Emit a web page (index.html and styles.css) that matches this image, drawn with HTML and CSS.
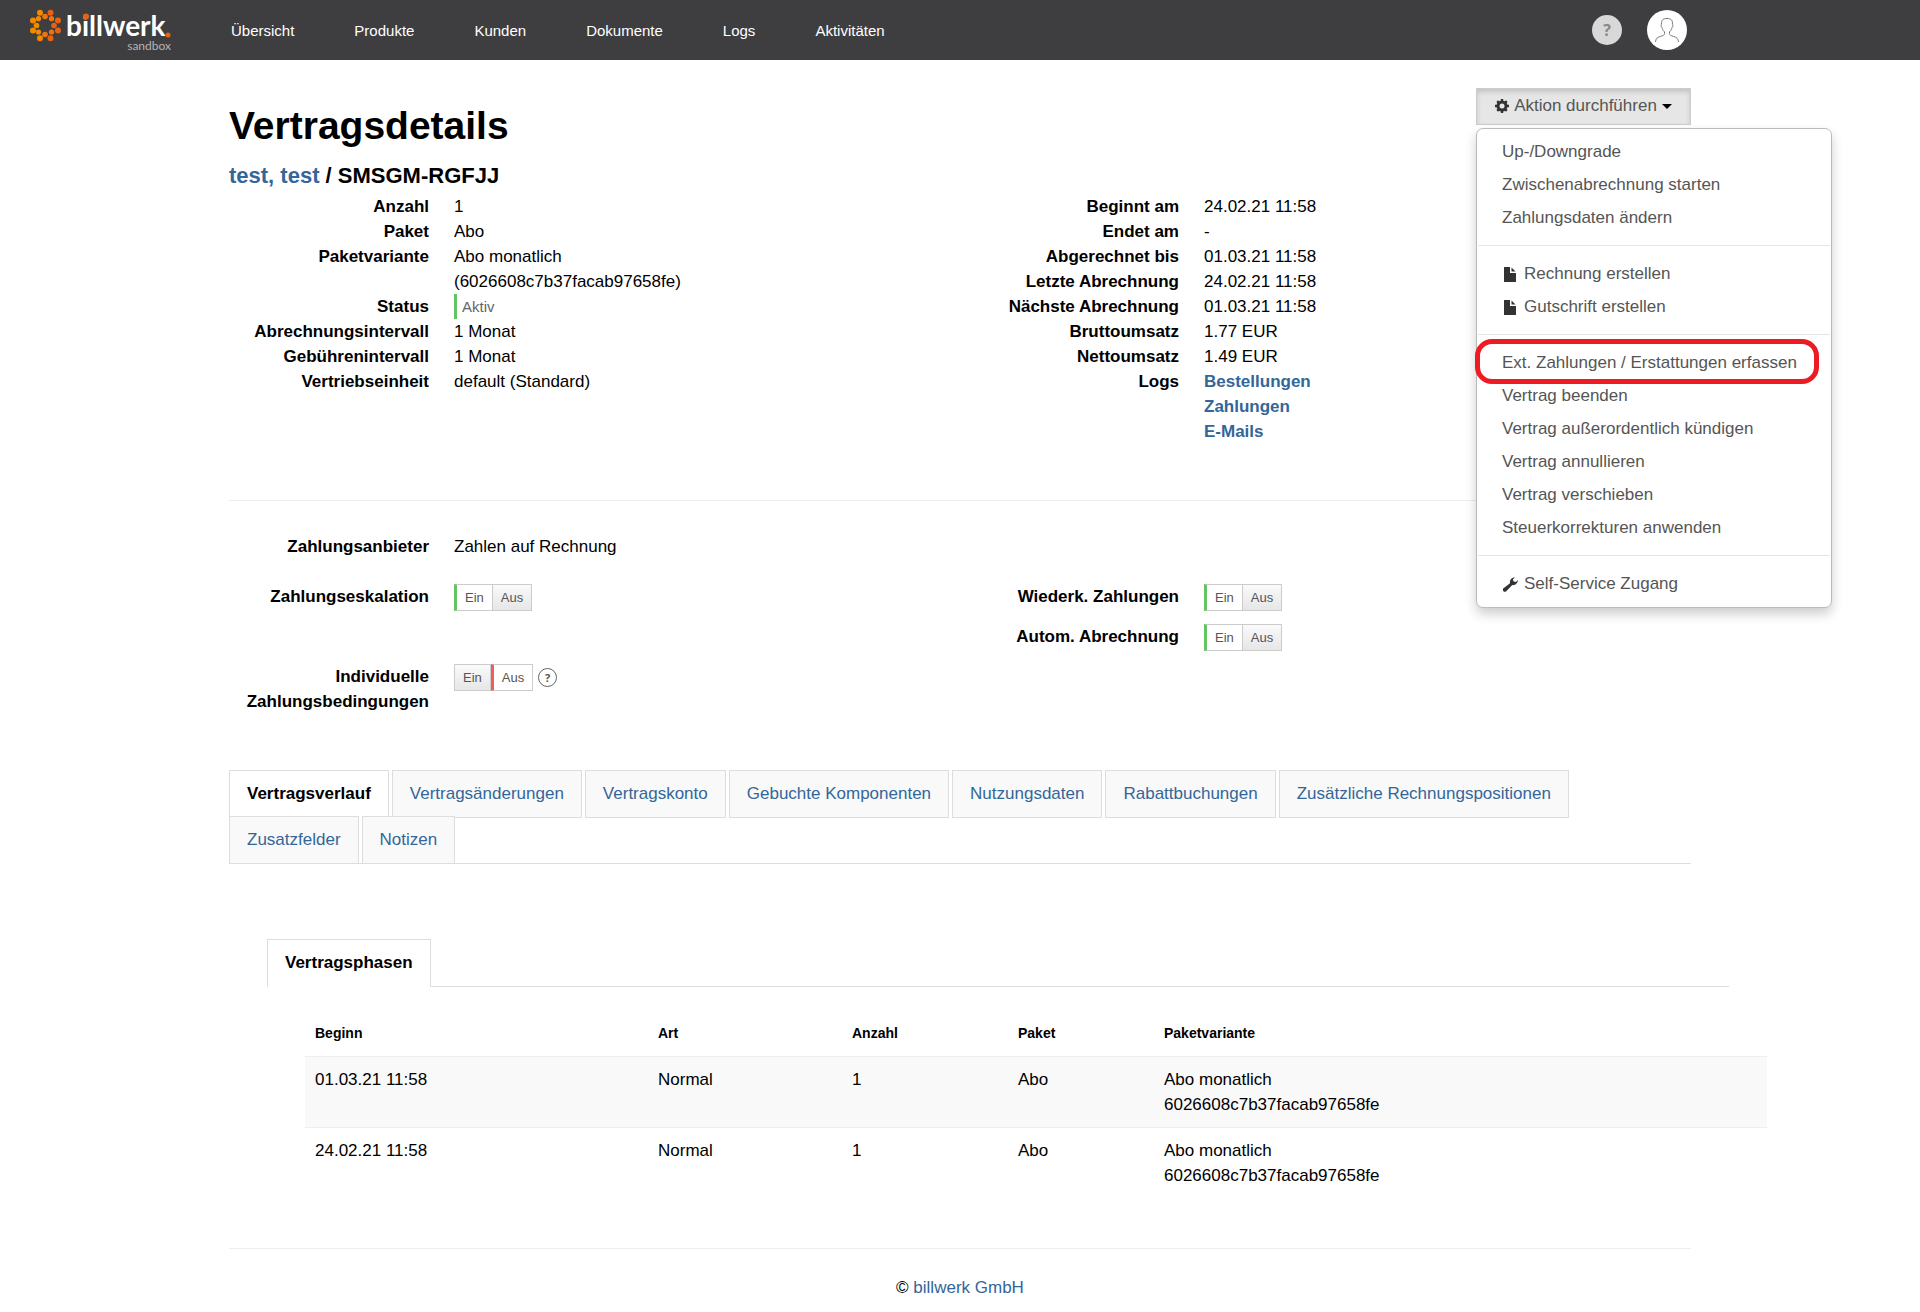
FILE: index.html
```html
<!DOCTYPE html>
<html lang="de">
<head>
<meta charset="utf-8">
<meta name="viewport" content="width=device-width, initial-scale=1">
<title>Vertragsdetails</title>
<link rel="stylesheet" href="styles.css">
</head>
<body>
<header class="topbar">
  <a class="logo" href="#" aria-label="billwerk sandbox">
    <svg width="160" height="60" viewBox="0 0 160 60">
      <g fill="#f28a00">
        <circle cx="9" cy="20.500" r="3"/><circle cx="9" cy="30.500" r="3"/>
        <circle cx="12.500" cy="25.500" r="2.800"/><circle cx="14.500" cy="18.700" r="2.600"/><circle cx="14.500" cy="32" r="2.600"/>
        <circle cx="16" cy="12.800" r="3"/><circle cx="16" cy="38.200" r="3"/>
      </g>
      <g fill="#ee7410">
        <circle cx="21" cy="16.500" r="2.800"/><circle cx="21" cy="34.500" r="2.800"/>
        <circle cx="27.500" cy="18.700" r="2.600"/><circle cx="27.500" cy="32" r="2.600"/>
      </g>
      <g fill="#e96212">
        <circle cx="26.500" cy="12.800" r="3"/><circle cx="26.500" cy="38.200" r="3"/>
        <circle cx="30" cy="25.500" r="2.800"/><circle cx="34" cy="20.500" r="3"/><circle cx="34" cy="30.500" r="3"/>
      </g>
      <text class="logo-name" x="42" y="36">billwerk</text>
      <circle cx="62" cy="16.500" r="3" fill="#e96212"/>
      <circle cx="144" cy="35" r="2.500" fill="#e96212"/>
      <text class="logo-sub" x="147" y="50" text-anchor="end">sandbox</text>
    </svg>
  </a>
  <div class="topbar-inner">
    <nav class="mainnav" aria-label="Hauptnavigation">
      <a href="#">Übersicht</a>
      <a href="#">Produkte</a>
      <a href="#">Kunden</a>
      <a href="#">Dokumente</a>
      <a href="#">Logs</a>
      <a href="#">Aktivitäten</a>
    </nav>
    <div class="user-tools">
      <button class="help" type="button">?</button>
      <button class="avatar" type="button" aria-label="Benutzerkonto">
        <svg width="26" height="26" viewBox="0 0 26 26" fill="none" stroke="#777" stroke-width="1">
          <path d="M1.500 25c.2-3.500 2-4.800 5-5.600 2.500-.7 4-1.200 4-3v-1.600C9 13.500 8.200 12 7.900 10.300c-.9-.3-1.200-2.800-.3-3C7.200 3 9 1.500 13 1.500c4.200 0 5.800 1.800 5.400 5.800.9.200.6 2.700-.3 3-.3 1.700-1.100 3.200-2.600 4.500v1.600c0 1.800 1.500 2.300 4 3 3 .8 4.800 2.100 5 5.600"/>
        </svg>
      </button>
    </div>
  </div>
</header>

<main class="container">
  <div class="page-head">
    <div>
      <h1>Vertragsdetails</h1>
      <h2><a href="#">test, test</a> / SMSGM-RGFJJ</h2>
    </div>
    <div class="action">
      <button class="action-btn" type="button" aria-haspopup="true" aria-expanded="true">
        <svg width="14" height="14" viewBox="0 0 14 14">
          <circle cx="7" cy="7" r="4" fill="none" stroke="#333" stroke-width="3"/>
          <path d="M7 0v14M0 7h14M2.200 2.200l9.600 9.600M11.800 2.200l-9.600 9.600" stroke="#333" stroke-width="2.400"/>
          <circle cx="7" cy="7" r="2.500" fill="#e6e6e6"/>
        </svg>
        Aktion durchführen
        <span class="caret"></span>
      </button>
      <ul class="menu">
        <li><a href="#">Up-/Downgrade</a></li>
        <li><a href="#">Zwischenabrechnung starten</a></li>
        <li><a href="#">Zahlungsdaten ändern</a></li>
        <li class="divider"></li>
        <li><a href="#"><svg width="16" height="16" viewBox="0 0 16 16"><path d="M2 1h6v6h6v9H2z" fill="#333"/><path d="M9.500 1.500v4h4z" fill="#333"/></svg>Rechnung erstellen</a></li>
        <li><a href="#"><svg width="16" height="16" viewBox="0 0 16 16"><path d="M2 1h6v6h6v9H2z" fill="#333"/><path d="M9.500 1.500v4h4z" fill="#333"/></svg>Gutschrift erstellen</a></li>
        <li class="divider"></li>
        <li class="marked"><a href="#">Ext. Zahlungen / Erstattungen erfassen</a></li>
        <li><a href="#">Vertrag beenden</a></li>
        <li><a href="#">Vertrag außerordentlich kündigen</a></li>
        <li><a href="#">Vertrag annullieren</a></li>
        <li><a href="#">Vertrag verschieben</a></li>
        <li><a href="#">Steuerkorrekturen anwenden</a></li>
        <li class="divider"></li>
        <li><a href="#"><svg width="16" height="16" viewBox="0 0 16 16"><path d="M1.200 12.600 8 7.200C7.500 4 9.600 1.300 13 1.200L10.800 3.600l.9 2 2.200.3 2-2c.1 3-2.300 5.600-5.600 5.200L4 15.400c-1.700 1.300-4-1-2.800-2.800z" fill="#333"/></svg>Self-Service Zugang</a></li>
      </ul>
    </div>
  </div>

  <section class="details">
    <dl>
      <dt>Anzahl</dt><dd>1</dd>
      <dt>Paket</dt><dd>Abo</dd>
      <dt>Paketvariante</dt><dd>Abo monatlich<br>(6026608c7b37facab97658fe)</dd>
      <dt>Status</dt><dd><span class="status">Aktiv</span></dd>
      <dt>Abrechnungsintervall</dt><dd>1 Monat</dd>
      <dt>Gebührenintervall</dt><dd>1 Monat</dd>
      <dt>Vertriebseinheit</dt><dd>default (Standard)</dd>
    </dl>
    <dl>
      <dt>Beginnt am</dt><dd>24.02.21 11:58</dd>
      <dt>Endet am</dt><dd>-</dd>
      <dt>Abgerechnet bis</dt><dd>01.03.21 11:58</dd>
      <dt>Letzte Abrechnung</dt><dd>24.02.21 11:58</dd>
      <dt>Nächste Abrechnung</dt><dd>01.03.21 11:58</dd>
      <dt>Bruttoumsatz</dt><dd>1.77 EUR</dd>
      <dt>Nettoumsatz</dt><dd>1.49 EUR</dd>
      <dt>Logs</dt><dd class="log-links"><a href="#">Bestellungen</a><a href="#">Zahlungen</a><a href="#">E-Mails</a></dd>
    </dl>
  </section>

  <section class="settings">
    <div class="field provider"><span class="label">Zahlungsanbieter</span><span>Zahlen auf Rechnung</span></div>
    <div class="field left"><span class="label" id="l1">Zahlungseskalation</span>
      <div class="toggle" role="group" aria-labelledby="l1"><button class="on" type="button" aria-pressed="true">Ein</button><button type="button" aria-pressed="false">Aus</button></div></div>
    <div class="field right"><span class="label" id="l2">Wiederk. Zahlungen</span>
      <div class="toggle" role="group" aria-labelledby="l2"><button class="on" type="button" aria-pressed="true">Ein</button><button type="button" aria-pressed="false">Aus</button></div></div>
    <div class="field right"><span class="label" id="l3">Autom. Abrechnung</span>
      <div class="toggle" role="group" aria-labelledby="l3"><button class="on" type="button" aria-pressed="true">Ein</button><button type="button" aria-pressed="false">Aus</button></div></div>
    <div class="field left"><span class="label" id="l4">Individuelle Zahlungsbedingungen</span>
      <div class="toggle" role="group" aria-labelledby="l4"><button type="button" aria-pressed="false">Ein</button><button class="off" type="button" aria-pressed="true">Aus</button><button class="hint" type="button">?</button></div></div>
  </section>

  <ul class="tabs">
    <li><a class="active" href="#">Vertragsverlauf</a></li>
    <li><a href="#">Vertragsänderungen</a></li>
    <li><a href="#">Vertragskonto</a></li>
    <li><a href="#">Gebuchte Komponenten</a></li>
    <li><a href="#">Nutzungsdaten</a></li>
    <li><a href="#">Rabattbuchungen</a></li>
    <li><a href="#">Zusätzliche Rechnungspositionen</a></li>
    <li><a href="#">Zusatzfelder</a></li>
    <li><a href="#">Notizen</a></li>
  </ul>

  <section class="pane">
    <ul class="tabs">
      <li><a class="active" href="#">Vertragsphasen</a></li>
    </ul>
    <div class="pane">
      <table class="phases">
        <colgroup><col class="c-begin"><col class="c-kind"><col class="c-count"><col class="c-plan"><col></colgroup>
        <thead>
          <tr><th>Beginn</th><th>Art</th><th>Anzahl</th><th>Paket</th><th>Paketvariante</th></tr>
        </thead>
        <tbody>
          <tr><td>01.03.21 11:58</td><td>Normal</td><td>1</td><td>Abo</td><td>Abo monatlich<br>6026608c7b37facab97658fe</td></tr>
          <tr><td>24.02.21 11:58</td><td>Normal</td><td>1</td><td>Abo</td><td>Abo monatlich<br>6026608c7b37facab97658fe</td></tr>
        </tbody>
      </table>
    </div>
  </section>
</main>

<footer class="container footer">© <a href="#">billwerk GmbH</a></footer>
</body>
</html>
```
FILE: styles.css
```css
* { box-sizing: border-box; }

body {
  margin: 0;
  background: #fff;
  color: #000;
  font: 17px/25px "Liberation Sans", Arial, sans-serif;
}

a { color: #369; text-decoration: none; }
button { font-family: inherit; margin: 0; padding: 0; cursor: pointer; }
ul, dl, dd { margin: 0; padding: 0; }
ul { list-style: none; }

.container, .topbar-inner {
  width: 100%;
  max-width: 1462px;
  margin: 0 auto;
}

/* Top bar */
.topbar {
  position: relative;
  height: 60px;
  background: #3e3e40;
}
.logo { position: absolute; left: 24px; top: 0; }
.logo svg { display: block; }
.logo-name { font: bold 28px Lato, sans-serif; fill: #fff; }
.logo-sub { font: 12px Lato, sans-serif; fill: #b4b4b4; }
.topbar-inner {
  display: flex;
  align-items: center;
  justify-content: space-between;
  height: 60px;
  padding: 0 4px 0 2px;
}
.mainnav { display: flex; gap: 60px; }
.mainnav a { color: #fff; font-size: 15px; }
.user-tools { display: flex; align-items: center; gap: 25px; }
.help {
  width: 30px;
  height: 30px;
  border: 0;
  border-radius: 50%;
  background: #d8d8d8;
  color: #888;
  font: bold 16px/30px "Open Sans", sans-serif;
}
.avatar {
  display: flex;
  align-items: center;
  justify-content: center;
  width: 40px;
  height: 40px;
  border: 0;
  border-radius: 50%;
  background: #fff;
}

/* Page head */
.page-head {
  display: flex;
  justify-content: space-between;
  align-items: flex-start;
  padding-top: 28px;
}
h1 { margin: 13px 0 0; font-size: 39px; line-height: 50px; }
h2 { margin: 12px 0 0; font-size: 22px; line-height: 25px; }

/* Action menu */
.action { position: relative; }
.action-btn {
  display: flex;
  align-items: center;
  justify-content: center;
  gap: 5px;
  width: 215px;
  height: 37px;
  padding-bottom: 1px;
  border: 1px solid #ccc;
  background: #e6e6e6;
  box-shadow: inset 0 3px 5px rgba(0, 0, 0, .15);
  color: #555;
  font-size: 17px;
}
.caret {
  border: 5px solid transparent;
  border-top-color: #000;
  border-bottom: 0;
}
.menu {
  position: absolute;
  z-index: 10;
  top: 40px;
  left: 0;
  width: 356px;
  padding: 6px 0 7px;
  border: 1px solid #bbb;
  border-radius: 7px;
  background: #fff;
  box-shadow: 0 6px 12px rgba(0, 0, 0, .2);
}
.menu a {
  display: flex;
  align-items: center;
  gap: 6px;
  padding: 4px 25px;
  color: #555;
  white-space: nowrap;
}
.menu .divider { height: 1px; margin: 11px 1px; background: #e5e5e5; }
.marked { position: relative; }
.marked::after {
  content: "";
  position: absolute;
  inset: -7px 12px -5px -2px;
  border: 5px solid #ed1c24;
  border-radius: 17px;
  pointer-events: none;
}

/* Contract data */
.details, .settings {
  display: grid;
  grid-template-columns: 1fr 1fr;
  column-gap: 38px;
}
.details {
  padding: 6px 0 56px;
  border-bottom: 1px solid #eee;
}
dl, .field {
  display: grid;
  grid-template-columns: 200px 1fr;
  column-gap: 25px;
  align-content: start;
}
dt, .label { font-weight: bold; text-align: right; }
.status {
  display: block;
  width: max-content;
  padding-left: 5px;
  border-left: 3px solid #62c462;
  color: #666;
  font-size: 15px;
}
.log-links { display: grid; justify-items: start; font-weight: bold; }

.settings { row-gap: 13px; padding: 33px 0 56px; }
.provider { grid-column: 1 / -1; margin-bottom: 12px; }
.left { grid-column: 1; }
.right { grid-column: 2; }
.toggle { display: flex; height: 27px; }
.toggle button {
  padding: 0 8px;
  border: 1px solid #ccc;
  background: linear-gradient(#fafafa, #e6e6e6);
  color: #555;
  font-size: 13px;
}
.toggle button + button { border-left: 0; }
.toggle .on { border-left: 3px solid #62c462; background: #fff; }
.toggle button.off { border-left: 3px solid #ee5f5b; background: #fff; }
.toggle button.hint {
  width: 19px;
  height: 19px;
  margin: 4px 0 0 5px;
  padding: 0;
  border: 1px solid #666;
  border-radius: 50%;
  background: #fff;
  font: bold 11px/16px "Open Sans", sans-serif;
}

/* Tabs */
.tabs {
  display: flex;
  flex-wrap: wrap;
  column-gap: 3px;
  padding-bottom: 1px;
  border-bottom: 1px solid #ddd;
}
.tabs li { margin-bottom: -2px; }
.tabs a {
  display: block;
  height: 48px;
  padding: 10px 17px;
  border: 1px solid #ddd;
  background: #f9f9f9;
}
.tabs .active {
  border-bottom-color: #fff;
  background: #fff;
  color: #000;
  font-weight: bold;
}

/* Nested panes step to the right at full width */
.pane { width: 100%; margin-left: 38px; padding-top: 75px; }
.pane .pane { padding-top: 24px; }

.phases { width: 100%; table-layout: fixed; border-collapse: collapse; }
.c-begin { width: 343px; }
.c-kind { width: 194px; }
.c-count { width: 166px; }
.c-plan { width: 146px; }
.phases th, .phases td { padding: 10px; text-align: left; vertical-align: top; }
.phases th { font-size: 14px; }
.phases td { border-top: 1px solid #eee; }
.phases tbody tr:first-child { background: #f9f9f9; }

.footer {
  margin-top: 50px;
  padding-top: 26px;
  border-top: 1px solid #eee;
  text-align: center;
}
```
